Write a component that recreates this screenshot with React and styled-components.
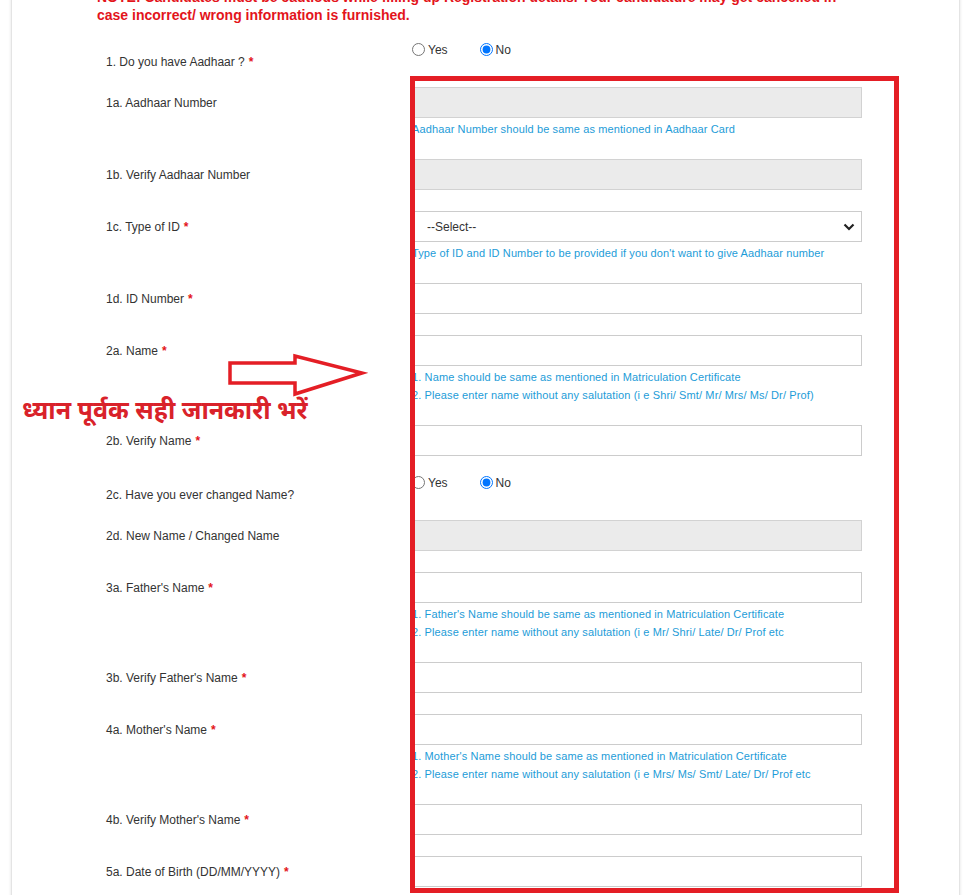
import React from "react";
import styled, { createGlobalStyle } from "styled-components";

const GlobalStyle = createGlobalStyle`
  body {
    margin: 0;
    background: #ffffff;
    font-family: "Liberation Sans", Arial, sans-serif;
  }
`;

// the form rows, in the order they appear
const fields = [
  { label: "1. Do you have Aadhaar ?", req: true, type: "radio" },
  {
    label: "1a. Aadhaar Number",
    type: "text",
    disabled: true,
    hints: ["Aadhaar Number should be same as mentioned in Aadhaar Card"],
  },
  { label: "1b. Verify Aadhaar Number", type: "text", disabled: true },
  {
    label: "1c. Type of ID",
    req: true,
    type: "select",
    hints: [
      "Type of ID and ID Number to be provided if you don't want to give Aadhaar number",
    ],
  },
  { label: "1d. ID Number", req: true, type: "text" },
  {
    label: "2a. Name",
    req: true,
    type: "text",
    hints: [
      "1. Name should be same as mentioned in Matriculation Certificate",
      "2. Please enter name without any salutation (i e Shri/ Smt/ Mr/ Mrs/ Ms/ Dr/ Prof)",
    ],
  },
  { label: "2b. Verify Name", req: true, type: "text" },
  { label: "2c. Have you ever changed Name?", type: "radio" },
  { label: "2d. New Name / Changed Name", type: "text", disabled: true },
  {
    label: "3a. Father's Name",
    req: true,
    type: "text",
    hints: [
      "1. Father's Name should be same as mentioned in Matriculation Certificate",
      "2. Please enter name without any salutation (i e Mr/ Shri/ Late/ Dr/ Prof etc",
    ],
  },
  { label: "3b. Verify Father's Name", req: true, type: "text" },
  {
    label: "4a. Mother's Name",
    req: true,
    type: "text",
    hints: [
      "1. Mother's Name should be same as mentioned in Matriculation Certificate",
      "2. Please enter name without any salutation (i e Mrs/ Ms/ Smt/ Late/ Dr/ Prof etc",
    ],
  },
  { label: "4b. Verify Mother's Name", req: true, type: "text" },
  { label: "5a. Date of Birth (DD/MM/YYYY)", req: true, type: "text" },
];

function Field({ field, index }) {
  if (field.type === "radio") {
    return (
      <RadioGroup>
        <RadioOption>
          <input type="radio" name={"r" + index} />
          Yes
        </RadioOption>
        <RadioOption>
          <input type="radio" name={"r" + index} defaultChecked />
          No
        </RadioOption>
      </RadioGroup>
    );
  }
  return (
    <div>
      {field.type === "select" ? (
        <SelectWrap>
          <Select defaultValue="">
            <option value="">--Select--</option>
          </Select>
          <Chevron width="12" height="8" viewBox="0 0 12 8">
            <path d="M1.5 1.5 L6 6 L10.5 1.5" fill="none" stroke="#222" strokeWidth="2.2" />
          </Chevron>
        </SelectWrap>
      ) : (
        <Input type="text" disabled={field.disabled} />
      )}
      {field.hints && (
        <Hints>
          {field.hints.map((h) => (
            <Hint key={h}>{h}</Hint>
          ))}
        </Hints>
      )}
    </div>
  );
}

export default function App() {
  return (
    <>
      <GlobalStyle />
      <Card>
        <Note>
          NOTE: Candidates must be cautious while filling up Registration
          details. Your candidature may get cancelled in case incorrect/ wrong
          information is furnished.
        </Note>
        <Form>
          {fields.map((f, i) => (
            <Row key={f.label} $radio={f.type === "radio"}>
              <Label $radio={f.type === "radio"}>
                {f.label}
                {f.req && <Star>*</Star>}
              </Label>
              <Field field={f} index={i} />
            </Row>
          ))}
        </Form>

        {/* annotation drawn over the form */}
        <Highlight />
        <Arrow width="140" height="46" viewBox="0 0 140 46">
          <polygon
            points="2,11 67,11 67,4 134,21 67,42 67,31 2,31"
            fill="#ffffff"
            stroke="#e41e25"
            strokeWidth="3.5"
            strokeLinejoin="miter"
          />
        </Arrow>
        <Hindi>ध्यान पूर्वक सही जानकारी भरें</Hindi>
      </Card>
    </>
  );
}

const Card = styled.div`
  position: relative;
  margin: -12px 9px 0 11px;
  padding: 0 0 20px 85px;
  border-left: 1px solid #e4e4e4;
  border-right: 1px solid #e4e4e4;
  box-shadow: 0 0 3px rgba(0, 0, 0, 0.12);
  background: #ffffff;
`;

const Note = styled.p`
  margin: 0 0 20px;
  width: 760px;
  font-size: 14px;
  line-height: 18px;
  font-weight: bold;
  color: #e3141b;
`;

const Form = styled.div`
  margin-left: 9px;
`;

const Row = styled.div`
  display: grid;
  grid-template-columns: 306px 450px;
  padding-bottom: ${(p) => (p.$radio ? "18px" : "21px")};
`;

const Label = styled.div`
  padding-top: ${(p) => (p.$radio ? "11px" : "9px")};
  font-size: 12px;
  line-height: 14px;
  color: #333333;
`;

const Star = styled.span`
  color: #e3141b;
  margin-left: 4px;
  font-weight: bold;
`;

const Input = styled.input`
  display: block;
  box-sizing: border-box;
  width: 450px;
  height: 31px;
  margin: 0;
  border: 1px solid #cccccc;
  background: #ffffff;
  &:disabled {
    background: #ebebeb;
    border-color: #d2d2d2;
  }
`;

const SelectWrap = styled.div`
  position: relative;
  width: 450px;
`;

const Select = styled.select`
  display: block;
  box-sizing: border-box;
  width: 450px;
  height: 31px;
  margin: 0;
  padding: 0 14px;
  appearance: none;
  border: 1px solid #cccccc;
  background: #ffffff;
  font-family: "Liberation Sans", Arial, sans-serif;
  font-size: 12px;
  color: #333333;
`;

const Chevron = styled.svg`
  position: absolute;
  right: 7px;
  top: 12px;
  pointer-events: none;
`;

const Hints = styled.div`
  margin-top: 2px;
`;

const Hint = styled.div`
  font-size: 11px;
  line-height: 18px;
  letter-spacing: 0.12px;
  color: #1d9cd8;
  white-space: nowrap;
`;

const RadioGroup = styled.div`
  display: flex;
  align-items: center;
  height: 13px;
  margin-top: -1px;
`;

const RadioOption = styled.label`
  display: flex;
  align-items: center;
  gap: 3px;
  margin-right: 32px;
  font-size: 12px;
  color: #333333;
  input {
    width: 13px;
    height: 13px;
    margin: 0;
  }
`;

const Highlight = styled.div`
  position: absolute;
  left: 398px;
  top: 88px;
  width: 489px;
  height: 817px;
  box-sizing: border-box;
  border: 5px solid #e41e25;
  pointer-events: none;
`;

const Arrow = styled.svg`
  position: absolute;
  left: 216px;
  top: 364px;
`;

const Hindi = styled.div`
  position: absolute;
  left: 10px;
  top: 410px;
  font-family: "Noto Sans Devanagari", "Lohit Devanagari", "Noto Sans", sans-serif;
  font-size: 25px;
  line-height: 30px;
  font-weight: bold;
  color: #d9222a;
  white-space: nowrap;
`;
